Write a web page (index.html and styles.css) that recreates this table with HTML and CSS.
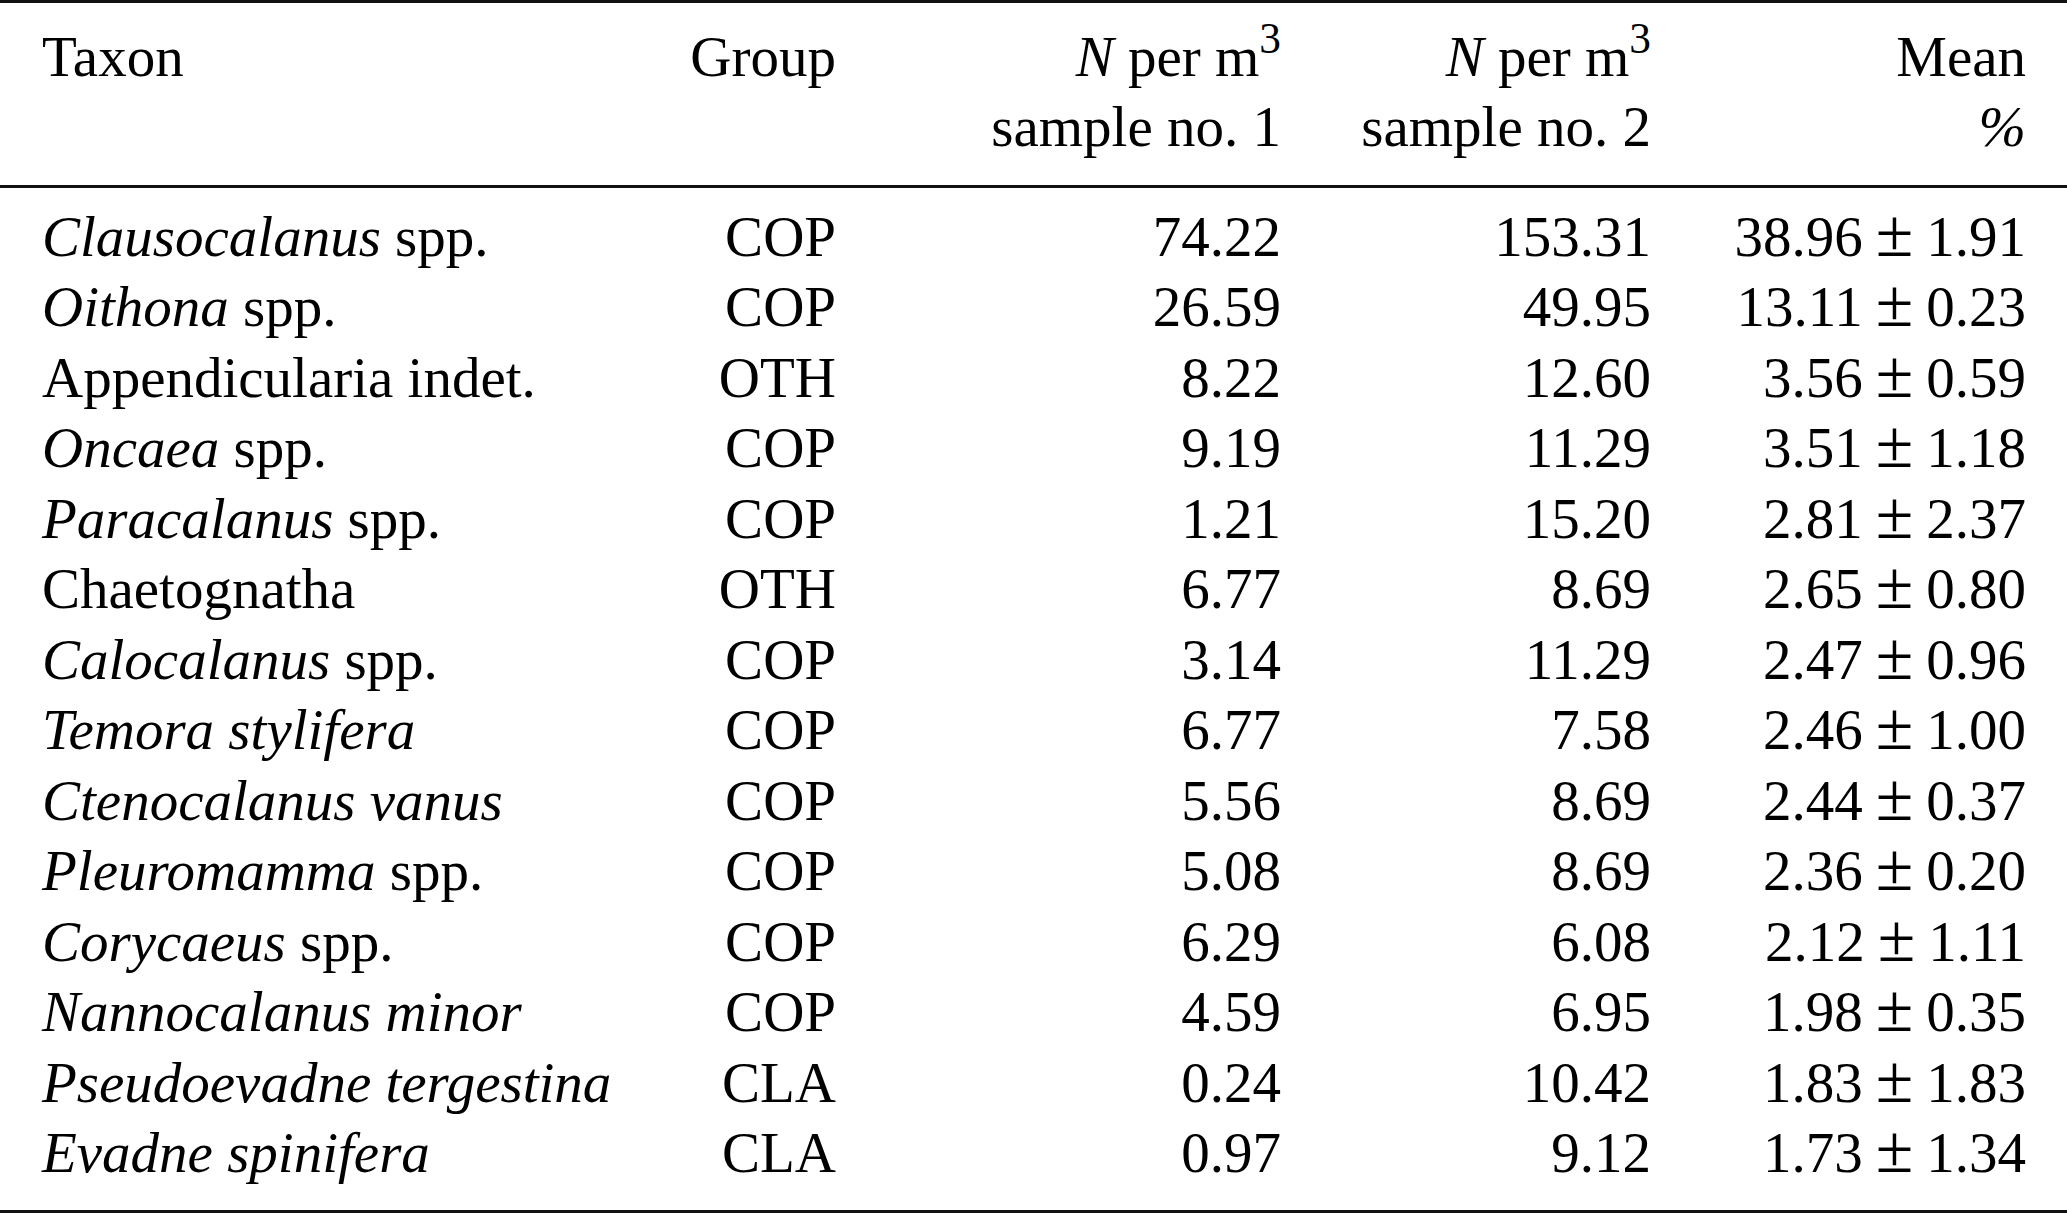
FILE: index.html
```html
<!DOCTYPE html>
<html lang="en">
<head>
<meta charset="utf-8">
<title>Taxon abundance table</title>
<link rel="stylesheet" href="styles.css">
</head>
<body>
<table class="tbl">
  <colgroup>
    <col class="c-taxon">
    <col class="c-group">
    <col class="c-s1">
    <col class="c-s2">
    <col class="c-mean">
  </colgroup>
  <thead>
    <tr>
      <th class="left first">Taxon</th>
      <th class="right">Group</th>
      <th class="right"><i>N</i> per m<sup>3</sup><br>sample no. 1</th>
      <th class="right"><i>N</i> per m<sup>3</sup><br>sample no. 2</th>
      <th class="right last">Mean<br><span class="pct">%</span></th>
    </tr>
  </thead>
  <tbody>
    <tr><td class="left first"><i>Clausocalanus</i> spp.</td><td class="right">COP</td><td class="right">74.22</td><td class="right">153.31</td><td class="right last">38.96<span class="pm">±</span>1.91</td></tr>
    <tr><td class="left first"><i>Oithona</i> spp.</td><td class="right">COP</td><td class="right">26.59</td><td class="right">49.95</td><td class="right last">13.11<span class="pm">±</span>0.23</td></tr>
    <tr><td class="left first">Appendicularia indet.</td><td class="right">OTH</td><td class="right">8.22</td><td class="right">12.60</td><td class="right last">3.56<span class="pm">±</span>0.59</td></tr>
    <tr><td class="left first"><i>Oncaea</i> spp.</td><td class="right">COP</td><td class="right">9.19</td><td class="right">11.29</td><td class="right last">3.51<span class="pm">±</span>1.18</td></tr>
    <tr><td class="left first"><i>Paracalanus</i> spp.</td><td class="right">COP</td><td class="right">1.21</td><td class="right">15.20</td><td class="right last">2.81<span class="pm">±</span>2.37</td></tr>
    <tr><td class="left first">Chaetognatha</td><td class="right">OTH</td><td class="right">6.77</td><td class="right">8.69</td><td class="right last">2.65<span class="pm">±</span>0.80</td></tr>
    <tr><td class="left first"><i>Calocalanus</i> spp.</td><td class="right">COP</td><td class="right">3.14</td><td class="right">11.29</td><td class="right last">2.47<span class="pm">±</span>0.96</td></tr>
    <tr><td class="left first"><i>Temora stylifera</i></td><td class="right">COP</td><td class="right">6.77</td><td class="right">7.58</td><td class="right last">2.46<span class="pm">±</span>1.00</td></tr>
    <tr><td class="left first"><i>Ctenocalanus vanus</i></td><td class="right">COP</td><td class="right">5.56</td><td class="right">8.69</td><td class="right last">2.44<span class="pm">±</span>0.37</td></tr>
    <tr><td class="left first"><i>Pleuromamma</i> spp.</td><td class="right">COP</td><td class="right">5.08</td><td class="right">8.69</td><td class="right last">2.36<span class="pm">±</span>0.20</td></tr>
    <tr><td class="left first"><i>Corycaeus</i> spp.</td><td class="right">COP</td><td class="right">6.29</td><td class="right">6.08</td><td class="right last">2.12<span class="pm">±</span>1.11</td></tr>
    <tr><td class="left first"><i>Nannocalanus minor</i></td><td class="right">COP</td><td class="right">4.59</td><td class="right">6.95</td><td class="right last">1.98<span class="pm">±</span>0.35</td></tr>
    <tr><td class="left first"><i>Pseudoevadne tergestina</i></td><td class="right">CLA</td><td class="right">0.24</td><td class="right">10.42</td><td class="right last">1.83<span class="pm">±</span>1.83</td></tr>
    <tr><td class="left first"><i>Evadne spinifera</i></td><td class="right">CLA</td><td class="right">0.97</td><td class="right">9.12</td><td class="right last">1.73<span class="pm">±</span>1.34</td></tr>
  </tbody>
</table>
</body>
</html>
```

FILE: styles.css
```css
html, body {
  margin: 0;
  padding: 0;
  background: #ffffff;
}

body {
  font-family: "Liberation Serif", "Times New Roman", serif;
  font-size: 57px;
  color: #000000;
  width: 2067px;
  height: 1214px;
  overflow: hidden;
}

.tbl {
  width: 2067px;
  table-layout: fixed;
  border-collapse: collapse;
  border-spacing: 0;
  border-top: 3px solid #111111;
  border-bottom: 3px solid #111111;
}

.c-taxon { width: 642px; }
.c-group { width: 194px; }
.c-s1 { width: 445px; }
.c-s2 { width: 370px; }
.c-mean { width: 416px; }

th, td {
  padding: 0;
  white-space: nowrap;
}

thead th {
  font-weight: normal;
  line-height: 70px;
  vertical-align: top;
  padding-top: 19px;
  padding-bottom: 23px;
  border-bottom: 3px solid #111111;
}

tbody td {
  line-height: 70.5px;
  vertical-align: top;
}

tbody tr:first-child td {
  padding-top: 13.5px;
}

tbody tr:last-child td {
  padding-bottom: 21.5px;
}

.left { text-align: left; }
.right { text-align: right; }

.first { padding-left: 42px; }
.last { padding-right: 41px; }

sup {
  font-size: 0.76em;
  line-height: 0;
  vertical-align: 0.52em;
}

.pct {
  font-style: italic;
}

.pm {
  font-size: 1.2em;
  line-height: 0;
  margin: 0 0.19em;
}
```
